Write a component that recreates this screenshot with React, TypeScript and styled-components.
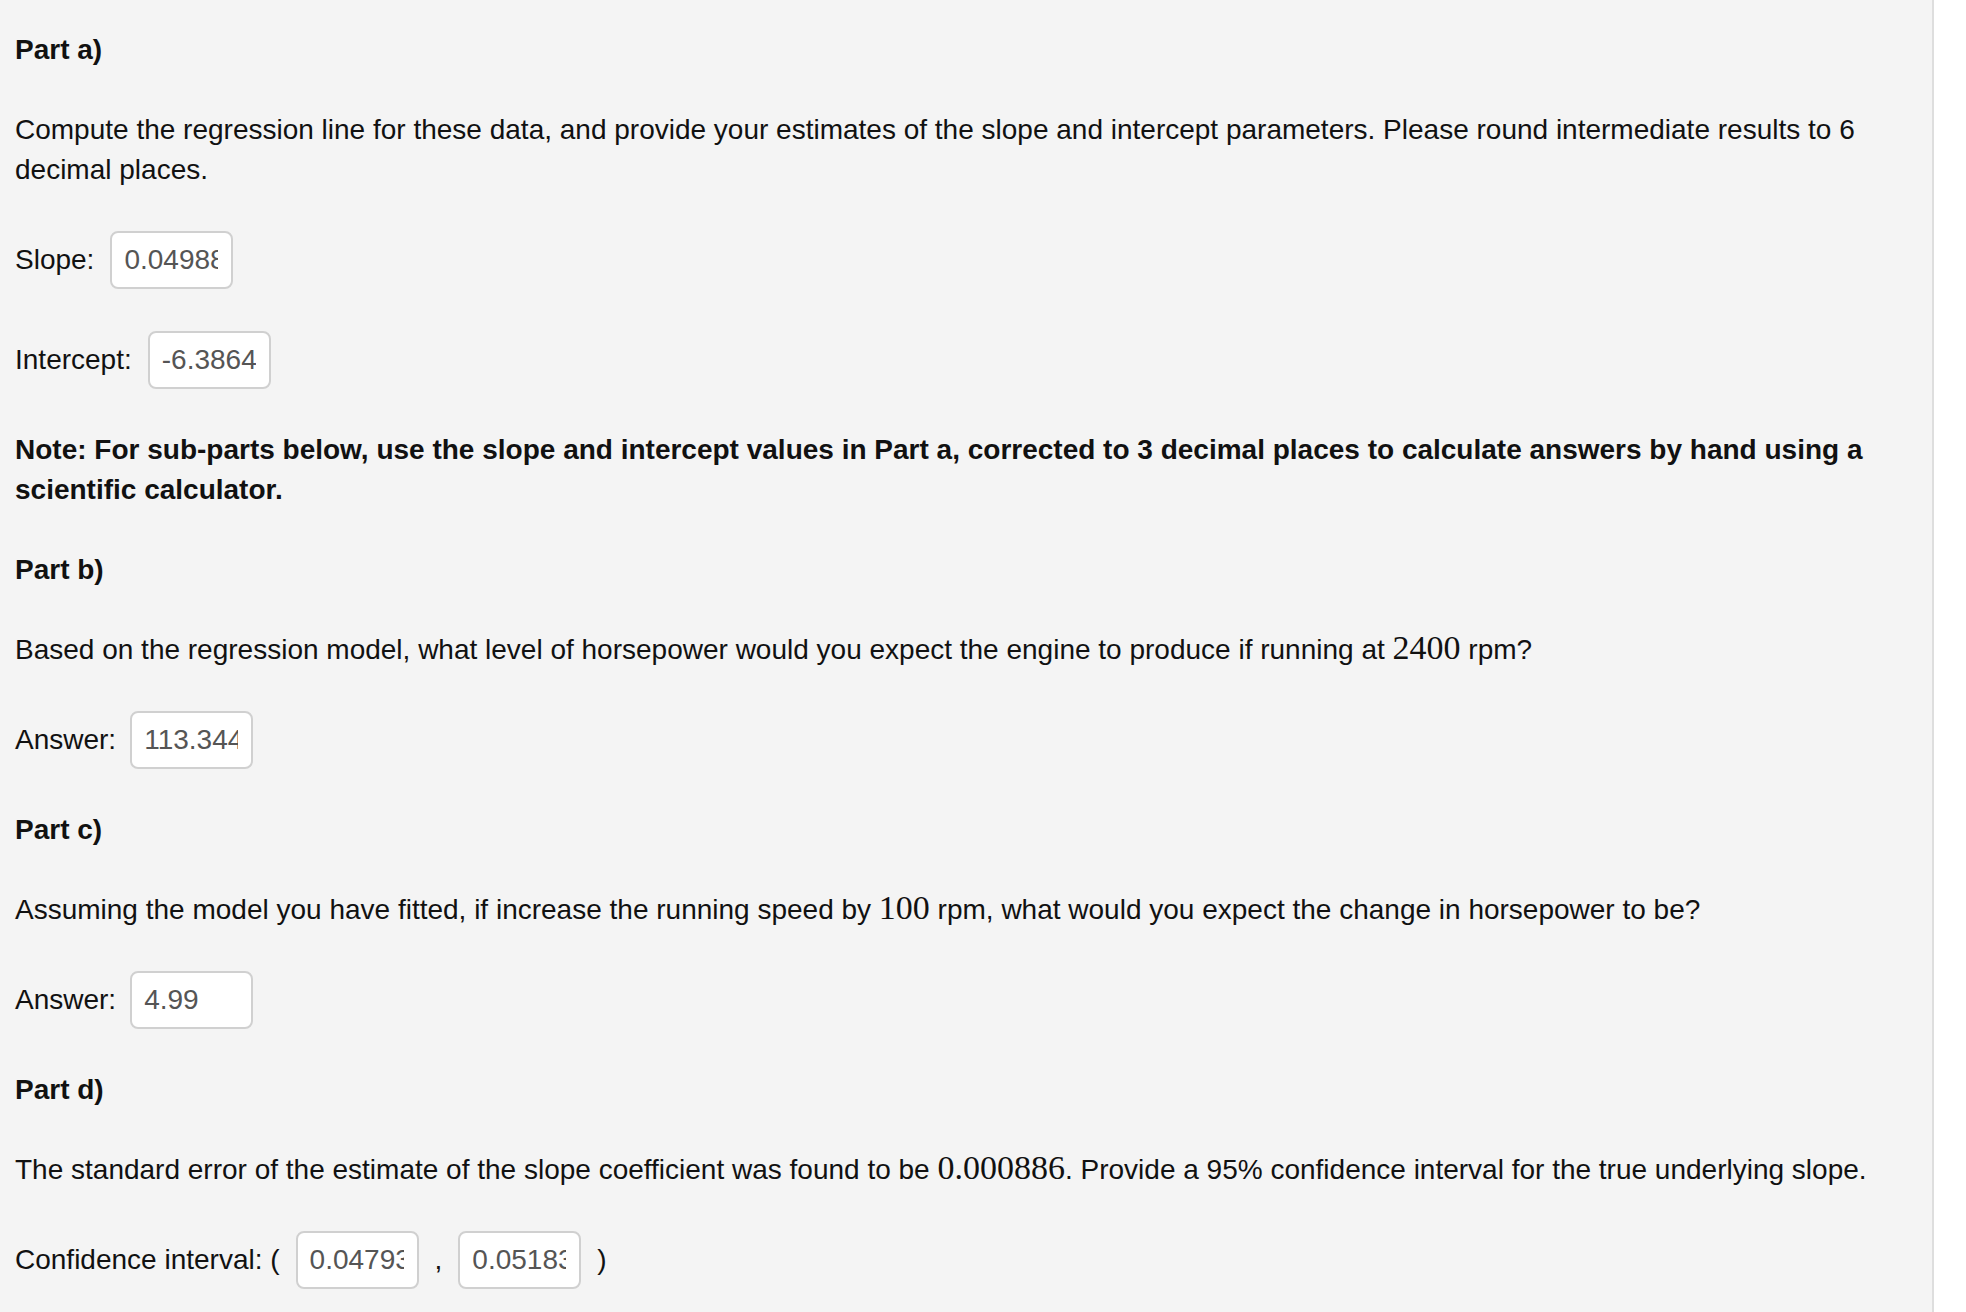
import React from "react";
import styled, { createGlobalStyle } from "styled-components";

const GlobalStyle = createGlobalStyle`
  html, body {
    margin: 0;
    padding: 0;
    background: #ffffff;
  }
  body {
    font-family: "Liberation Sans", Arial, Helvetica, sans-serif;
    color: #111;
  }
`;

const Page = styled.div`
  display: flex;
  min-height: 100vh;
`;

const Panel = styled.main`
  width: 1902px;
  min-height: 100vh;
  box-sizing: content-box;
  padding: 30px 15px 0 15px;
  background: #f4f4f4;
  border-right: 2px solid #dedede;
  display: flex;
  flex-direction: column;
  gap: 40px;
  font-size: 28px;
  line-height: 40px;
`;

const Heading = styled.p`
  margin: 0;
  font-weight: 700;
`;

const Para = styled.p<{ $bold?: boolean }>`
  margin: 0;
  font-weight: ${(p) => (p.$bold ? 700 : 400)};
`;

// inline maths is set in a serif face, a bit larger, without growing the line
const Math = styled.span`
  font-family: "Liberation Serif", "Times New Roman", serif;
  font-size: 34px;
  line-height: 20px;
`;

const FieldRow = styled.div`
  display: flex;
  align-items: center;
  gap: 16px;
  height: 60px;
`;

const Label = styled.span<{ $extra?: number }>`
  margin-right: ${(p) => p.$extra ?? 0}px;
`;

const Punct = styled.span`
  color: #111;
`;

const AnswerBox = styled.input`
  box-sizing: border-box;
  width: 123px;
  height: 58px;
  padding: 0 13px 0 12px;
  border: 2px solid #d0d0d0;
  border-radius: 8px;
  background: #fff;
  color: #555;
  font-family: "Liberation Sans", Arial, Helvetica, sans-serif;
  font-size: 28px;
  outline: none;
`;

function Field({ label, value, extra }: { label: string; value: string; extra?: number }) {
  return (
    <FieldRow>
      <Label $extra={extra}>{label}</Label>
      <AnswerBox readOnly value={value} />
    </FieldRow>
  );
}

export default function App() {
  return (
    <>
      <GlobalStyle />
      <Page>
        <Panel>
          <Heading>Part a)</Heading>
          <Para>
            Compute the regression line for these data, and provide your estimates of the slope
            and intercept parameters. Please round intermediate results to 6 decimal places.
          </Para>
          <Field label="Slope:" value="0.04988" />
          <Field label="Intercept:" value="-6.3864" />
          <Para $bold>
            Note: For sub-parts below, use the slope and intercept values in Part a, corrected to 3
            decimal places to calculate answers by hand using a scientific calculator.
          </Para>

          <Heading>Part b)</Heading>
          <Para>
            Based on the regression model, what level of horsepower would you expect the engine to
            produce if running at <Math>2400</Math> rpm?
          </Para>
          <Field label="Answer:" value="113.344" extra={-2} />

          <Heading>Part c)</Heading>
          <Para>
            Assuming the model you have fitted, if increase the running speed by <Math>100</Math> rpm,
            what would you expect the change in horsepower to be?
          </Para>
          <Field label="Answer:" value="4.99" extra={-2} />

          <Heading>Part d)</Heading>
          <Para>
            The standard error of the estimate of the slope coefficient was found to be{" "}
            <Math>0.000886</Math>. Provide a 95% confidence interval for the true underlying slope.
          </Para>
          <FieldRow>
            <Label>Confidence interval: (</Label>
            <AnswerBox readOnly value="0.04793" />
            <Punct>,</Punct>
            <AnswerBox readOnly value="0.05183" />
            <Punct>)</Punct>
          </FieldRow>
        </Panel>
      </Page>
    </>
  );
}
